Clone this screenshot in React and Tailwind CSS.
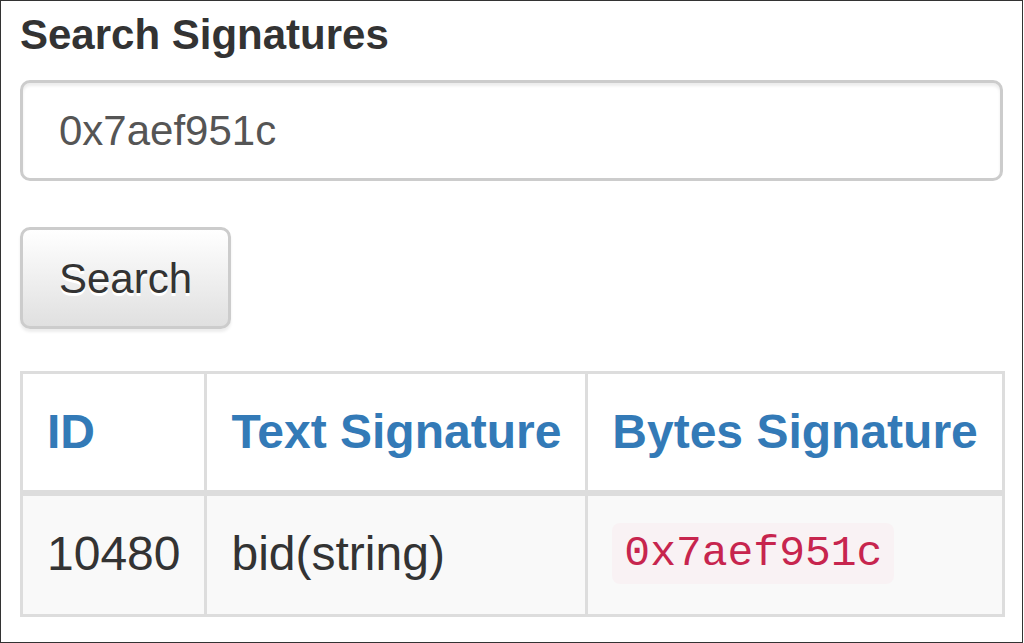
export default function App() {
  const rows = [{ id: "10480", text: "bid(string)", bytes: "0x7aef951c" }];

  return (
    <div className="w-[1023px] h-[643px] border border-[#333] bg-white overflow-hidden font-['Liberation_Sans',Arial,sans-serif] text-[#333]">
      <div className="px-[19px] pt-[11px]">
        <h1 className="text-[42px] leading-[46px] font-bold">Search Signatures</h1>

        <input
          readOnly
          value="0x7aef951c"
          className="mt-[22px] block w-full h-[101px] px-[36px] border-[3px] border-[#ccc] rounded-[10px] bg-white text-[42px] text-[#555] shadow-[inset_0_3px_3px_rgba(0,0,0,0.075)] outline-none"
        />

        <button className="mt-[46px] block h-[102px] w-[211px] border-[3px] border-[#ccc] rounded-[10px] bg-linear-to-b from-white to-[#e0e0e0] text-[42px] text-[#333] [text-shadow:0_3px_0_#fff] shadow-[0_3px_3px_rgba(0,0,0,0.075)]">
          Search
        </button>

        <table className="mt-[42px] w-full border-collapse border-[3px] border-[#ddd] text-[48px] leading-[68px]">
          <thead>
            <tr>
              <th className="w-[185px] border-[3px] border-b-[6px] border-[#ddd] p-[24px] text-left font-bold text-[#337ab7] align-top whitespace-nowrap">ID</th>
              <th className="w-[381px] border-[3px] border-b-[6px] border-[#ddd] p-[24px] text-left font-bold text-[#337ab7] align-top whitespace-nowrap">Text Signature</th>
              <th className="border-[3px] border-b-[6px] border-[#ddd] p-[24px] text-left font-bold text-[#337ab7] align-top whitespace-nowrap">Bytes Signature</th>
            </tr>
          </thead>
          <tbody>
            {rows.map((r) => (
              <tr key={r.id} className="bg-[#f9f9f9]">
                <td className="border-[3px] border-[#ddd] p-[24px] align-top">{r.id}</td>
                <td className="border-[3px] border-[#ddd] p-[24px] align-top">{r.text}</td>
                <td className="border-[3px] border-[#ddd] p-[24px] align-top">
                  <code className="px-[12px] py-[6px] rounded-[8px] bg-[#f9f2f4] text-[#c7254e] text-[43px] font-['Liberation_Mono',monospace] align-[7px]">
                    {r.bytes}
                  </code>
                </td>
              </tr>
            ))}
          </tbody>
        </table>
      </div>
    </div>
  );
}
